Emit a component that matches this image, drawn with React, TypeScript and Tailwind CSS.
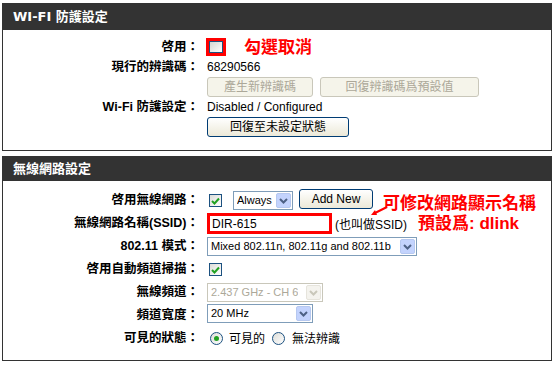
import type { ReactNode } from "react"

function Chevron({ color = "#4d6185" }: { color?: string }) {
  return (
    <svg width="9" height="6" viewBox="0 0 9 6">
      <polyline points="1,1 4.5,4.5 8,1" fill="none" stroke={color} strokeWidth="2" />
    </svg>
  )
}

function Select({ text, width, disabled }: { text: string; width: string; disabled?: boolean }) {
  return (
    <div
      className={`flex h-[19px] items-center justify-between border bg-white pl-[3px] pr-[1px] text-[11px] ${width} ${
        disabled ? "border-[#c9c7ba] text-[#aca899]" : "border-[#7f9db9] text-black"
      }`}
    >
      <span className="overflow-hidden whitespace-nowrap leading-none">{text}</span>
      <span
        className={`ml-[2px] flex h-[15px] w-[15px] shrink-0 items-center justify-center rounded-[2px] border ${
          disabled ? "border-[#e6e4dc] bg-[#f4f3ee]" : "border-[#b6c8f0] bg-[#c3d3fd]"
        }`}
      >
        <Chevron color={disabled ? "#c9c7ba" : "#4d6185"} />
      </span>
    </div>
  )
}

function Button({ children, width, disabled }: { children: ReactNode; width: string; disabled?: boolean }) {
  return (
    <div
      className={`flex h-[20px] items-center justify-center rounded-[3px] border ${width} ${
        disabled
          ? "border-[#c9c7ba] bg-[#f5f4ea] text-[#aca899]"
          : "border-[#003c74] bg-gradient-to-b from-white to-[#ece9d8] text-black"
      }`}
    >
      {children}
    </div>
  )
}

function CheckBox({ checked }: { checked?: boolean }) {
  return (
    <div className="flex h-[13px] w-[13px] items-center justify-center border border-[#1c5180] bg-gradient-to-br from-[#dcdcd7] to-white">
      {checked && (
        <svg width="9" height="8" viewBox="0 0 9 8">
          <polyline points="1,4 3.5,6.5 8,1.5" fill="none" stroke="#21a121" strokeWidth="2" />
        </svg>
      )}
    </div>
  )
}

function Radio({ checked }: { checked?: boolean }) {
  return (
    <div className="flex h-[13px] w-[13px] items-center justify-center rounded-full border border-[#1c5180] bg-gradient-to-br from-[#dcdcd7] to-white">
      {checked && <div className="h-[5px] w-[5px] rounded-full bg-[#21a121]" />}
    </div>
  )
}

function Row({ label, h, children }: { label: string; h: string; children?: ReactNode }) {
  return (
    <div className={`flex items-center ${h}`}>
      <div className="w-[196px] whitespace-nowrap text-right text-[12.5px] font-bold">{label}</div>
      <div className="ml-[8px] flex items-center">{children}</div>
    </div>
  )
}

function Panel({ title, head, children }: { title: string; head: string; children: ReactNode }) {
  return (
    <div className="border border-[#333333]">
      <div className={`flex items-center bg-[#333333] pl-[10px] text-[13px] font-bold text-white ${head}`}>
        <span className="font-['DejaVu_Sans','Noto_Sans_CJK_TC',sans-serif]">{title}</span>
      </div>
      {children}
    </div>
  )
}

export default function App() {
  return (
    <div className="h-[365px] w-[554px] overflow-hidden bg-white pt-[3px] font-['Liberation_Sans','Noto_Sans_CJK_TC',sans-serif] text-[12px] text-black">
      <div className="ml-[2px] w-[550px]">
        <Panel title="WI-FI 防護設定" head="h-[26px]">
          <div className="pb-[13px] pt-[7px]">
            <Row label="啓用：" h="h-[20px]">
              <div className="ml-[-1px] flex h-[18px] w-[20px] items-center justify-center border-[3px] border-[#ff0000]">
                <div className="h-[12px] w-[14px] border border-[#1c5180] bg-gradient-to-br from-[#d5d5d0] to-white" />
              </div>
              <span className="ml-[18px] text-[17px] font-bold leading-none text-[#ff0000]">勾選取消</span>
            </Row>
            <Row label="現行的辨識碼：" h="h-[20px]">
              <span>68290566</span>
            </Row>
            <Row label="" h="h-[20px]">
              <Button width="w-[106px]" disabled>
                產生新辨識碼
              </Button>
              <div className="ml-[7px]">
                <Button width="w-[159px]" disabled>
                  回復辨識碼爲預設值
                </Button>
              </div>
            </Row>
            <Row label="Wi-Fi 防護設定：" h="h-[20px]">
              <span>Disabled / Configured</span>
            </Row>
            <Row label="" h="h-[20px]">
              <Button width="w-[142px]">回復至未設定狀態</Button>
            </Row>
          </div>
        </Panel>

        <div className="mt-[5px]">
          <Panel title="無線網路設定" head="h-[24px]">
            <div className="relative pb-[10px] pt-[8px]">
              <Row label="啓用無線網路：" h="h-[23px]">
                <div className="ml-[2px]">
                  <CheckBox checked />
                </div>
                <div className="ml-[11px]">
                  <Select text="Always" width="w-[60px]" />
                </div>
                <div className="mb-[3px] ml-[6px]">
                  <Button width="w-[74px]">Add New</Button>
                </div>
              </Row>
              <Row label="無線網路名稱(SSID)：" h="h-[23px]">
                <div className="flex h-[21px] w-[125px] items-center border-[3px] border-[#ff0000] bg-white pl-[2px]">
                  DIR-615
                </div>
                <span className="ml-[3px] mt-[2px]">(也叫做SSID)</span>
              </Row>
              <Row label="802.11 模式：" h="h-[23px]">
                <Select text="Mixed 802.11n, 802.11g and 802.11b" width="w-[210px]" />
              </Row>
              <Row label="啓用自動頻道掃描：" h="h-[23px]">
                <div className="ml-[2px]">
                  <CheckBox checked />
                </div>
              </Row>
              <Row label="無線頻道：" h="h-[23px]">
                <Select text="2.437 GHz - CH 6" width="w-[116px]" disabled />
              </Row>
              <Row label="頻道寬度：" h="h-[23px]">
                <div className="mb-[4px]">
                  <Select text="20 MHz" width="w-[106px]" />
                </div>
              </Row>
              <Row label="可見的狀態：" h="h-[23px]">
                <div className="ml-[3px]">
                  <Radio checked />
                </div>
                <span className="ml-[6px]">可見的</span>
                <div className="ml-[7px]">
                  <Radio />
                </div>
                <span className="ml-[7px]">無法辨識</span>
              </Row>

              <div className="absolute left-[380px] top-[13px] text-[17px] font-bold leading-[20px] text-[#ff0000]">
                <div>可修改網路顯示名稱</div>
                <div className="pl-[35px]">
                  預設爲: <span className="font-['Liberation_Sans',sans-serif]">dlink</span>
                </div>
              </div>
              <svg className="absolute left-[366px] top-[24px]" width="20" height="12" viewBox="0 0 20 12">
                <line x1="18" y1="2" x2="6" y2="8" stroke="#ff0000" strokeWidth="2" />
                <polygon points="2,10 6,5 8,10" fill="#ff0000" />
              </svg>
            </div>
          </Panel>
        </div>
      </div>
    </div>
  )
}
